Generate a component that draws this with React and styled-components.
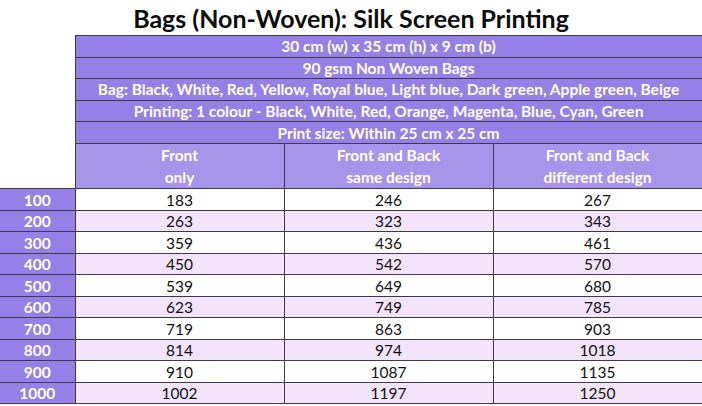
import React from "react";
import styled, { createGlobalStyle } from "styled-components";

const Global = createGlobalStyle`
  html, body { margin: 0; padding: 0; background: #ffffff; }
  body { font-family: "Lato", "Open Sans", sans-serif; }
`;

const Page = styled.div`
  width: 702px;
  height: 406px;
  overflow: hidden;
  background: #ffffff;
`;

const Title = styled.h1`
  margin: 0;
  height: 35px;
  line-height: 36px;
  text-align: center;
  font-family: "Lato", sans-serif;
  font-weight: 700;
  font-size: 25px;
  color: #0d0d0d;
`;

const Table = styled.table`
  border-collapse: collapse;
  table-layout: fixed;
  width: 702px;
  font-family: "Lato", sans-serif;
  font-size: 15.5px;
`;

const Row = styled.tr`
  height: ${(p) => p.$h}px;
`;

const Cell = styled.td`
  padding: 0;
  line-height: 18px;
  text-align: center;
  white-space: nowrap;
`;

const Blank = styled(Cell)`
  background: #ffffff;
  border: none;
`;

const InfoCell = styled(Cell)`
  background: #9580e7;
  color: #ffffff;
  font-weight: 700;
  border: 1px solid #3d3b4a;
`;

const HeadCell = styled(Cell)`
  background: #a795ec;
  color: #ffffff;
  font-weight: 700;
  line-height: 22px;
  border: 1px solid #3d3b4a;
`;

const LabelCell = styled(Cell)`
  background: #9580e7;
  color: #ffffff;
  font-weight: 700;
  border-top: 1px solid #3d3b4a;
  border-bottom: 1px solid #3d3b4a;
  border-right: 1px solid #3d3b4a;
`;

const ValueCell = styled(Cell)`
  background: ${(p) => (p.$alt ? "#f4e4fb" : "#ffffff")};
  color: #111111;
  font-weight: 400;
  border: 1px solid #3d3b4a;
`;

const info = [
  "30 cm (w) x 35 cm (h) x 9 cm (b)",
  "90 gsm Non Woven Bags",
  "Bag: Black, White, Red, Yellow, Royal blue, Light blue, Dark green, Apple green, Beige",
  "Printing: 1 colour - Black, White, Red, Orange, Magenta, Blue, Cyan, Green",
  "Print size: Within 25 cm x 25 cm",
];

const data = [
  [100, 183, 246, 267],
  [200, 263, 323, 343],
  [300, 359, 436, 461],
  [400, 450, 542, 570],
  [500, 539, 649, 680],
  [600, 623, 749, 785],
  [700, 719, 863, 903],
  [800, 814, 974, 1018],
  [900, 910, 1087, 1135],
  [1000, 1002, 1197, 1250],
];

export default function App() {
  return (
    <Page>
      <Global />
      <Title>Bags (Non-Woven): Silk Screen Printing</Title>
      <Table>
        <colgroup>
          <col style={{ width: 75 }} />
          <col style={{ width: 209 }} />
          <col style={{ width: 209 }} />
          <col style={{ width: 209 }} />
        </colgroup>
        <tbody>
          {info.map((t) => (
            <Row key={t} $h={21.6}>
              <Blank />
              <InfoCell colSpan={3}>{t}</InfoCell>
            </Row>
          ))}
          <Row $h={45.5}>
            <Blank />
            <HeadCell>
              Front
              <br />
              only
            </HeadCell>
            <HeadCell>
              Front and Back
              <br />
              same design
            </HeadCell>
            <HeadCell>
              Front and Back
              <br />
              different design
            </HeadCell>
          </Row>
          {data.map((r, i) => (
            <Row key={r[0]} $h={21.5}>
              <LabelCell>{r[0]}</LabelCell>
              <ValueCell $alt={i % 2 === 1}>{r[1]}</ValueCell>
              <ValueCell $alt={i % 2 === 1}>{r[2]}</ValueCell>
              <ValueCell $alt={i % 2 === 1}>{r[3]}</ValueCell>
            </Row>
          ))}
        </tbody>
      </Table>
    </Page>
  );
}
